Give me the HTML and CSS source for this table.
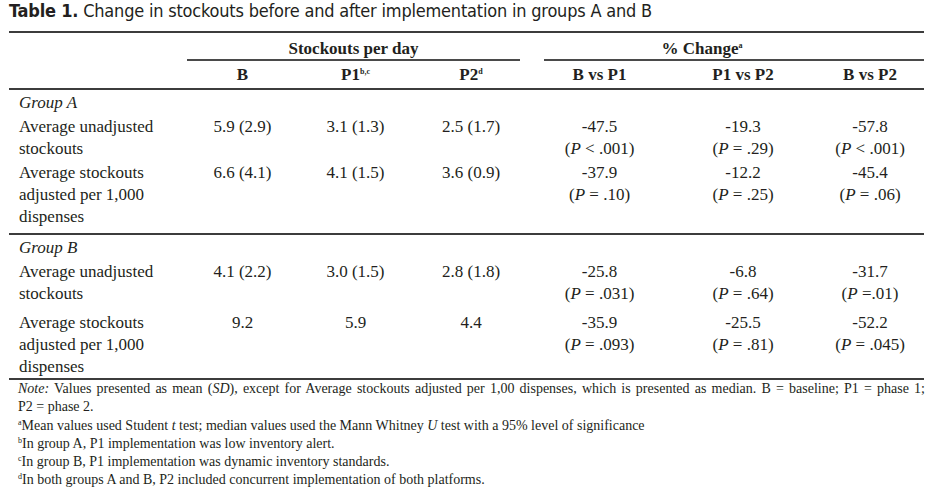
FILE: index.html
```html
<!DOCTYPE html>
<html>
<head>
<meta charset="utf-8">
<link rel="stylesheet" href="styles.css">
</head>
<body>
<div class="page">
  <h1 class="title"><b>Table 1.</b> Change in stockouts before and after implementation in groups A and B</h1>
  <table class="data">
    <colgroup>
      <col class="c-label"><col class="c-b"><col class="c-p1"><col class="c-p2"><col class="c-bp1"><col class="c-p1p2"><col class="c-bp2">
    </colgroup>
    <thead>
      <tr class="h1">
        <th></th>
        <th colspan="3"><div class="span-head span-left">Stockouts per day</div></th>
        <th colspan="3"><div class="span-head span-right">% Change<sup>a</sup></div></th>
      </tr>
      <tr class="h2">
        <th></th>
        <th>B</th>
        <th>P1<sup>b,c</sup></th>
        <th>P2<sup>d</sup></th>
        <th>B vs P1</th>
        <th>P1 vs P2</th>
        <th>B vs P2</th>
      </tr>
    </thead>
    <tbody class="grp-a">
      <tr class="group"><td colspan="7"><i>Group A</i></td></tr>
      <tr>
        <td class="label">Average unadjusted stockouts</td>
        <td>5.9 (2.9)</td><td>3.1 (1.3)</td><td>2.5 (1.7)</td>
        <td class="pc">-47.5<br>(<i>P</i> &lt; .001)</td>
        <td class="pc">-19.3<br>(<i>P</i> = .29)</td>
        <td class="pc">-57.8<br>(<i>P</i> &lt; .001)</td>
      </tr>
      <tr class="last">
        <td class="label">Average stockouts adjusted per 1,000 dispenses</td>
        <td>6.6 (4.1)</td><td>4.1 (1.5)</td><td>3.6 (0.9)</td>
        <td class="pc">-37.9<br>(<i>P</i> = .10)</td>
        <td class="pc">-12.2<br>(<i>P</i> = .25)</td>
        <td class="pc">-45.4<br>(<i>P</i> = .06)</td>
      </tr>
    </tbody>
    <tbody class="grp-b">
      <tr class="group"><td colspan="7"><i>Group B</i></td></tr>
      <tr class="wide">
        <td class="label">Average unadjusted stockouts</td>
        <td>4.1 (2.2)</td><td>3.0 (1.5)</td><td>2.8 (1.8)</td>
        <td class="pc">-25.8<br>(<i>P</i> = .031)</td>
        <td class="pc">-6.8<br>(<i>P</i> = .64)</td>
        <td class="pc">-31.7<br>(<i>P</i> =.01)</td>
      </tr>
      <tr>
        <td class="label">Average stockouts adjusted per 1,000 dispenses</td>
        <td>9.2</td><td>5.9</td><td>4.4</td>
        <td class="pc">-35.9<br>(<i>P</i> = .093)</td>
        <td class="pc">-25.5<br>(<i>P</i> = .81)</td>
        <td class="pc">-52.2<br>(<i>P</i> = .045)</td>
      </tr>
    </tbody>
  </table>
  <div class="notes">
    <p class="just"><i>Note:</i> Values presented as mean (<i>SD</i>), except for Average stockouts adjusted per 1,00 dispenses, which is presented as median. B = baseline; P1 = phase 1;</p>
    <p>P2 = phase 2.</p>
    <p><sup>a</sup>Mean values used Student <i>t</i> test; median values used the Mann Whitney <i>U</i> test with a 95% level of significance</p>
    <p><sup>b</sup>In group A, P1 implementation was low inventory alert.</p>
    <p><sup>c</sup>In group B, P1 implementation was dynamic inventory standards.</p>
    <p><sup>d</sup>In both groups A and B, P2 included concurrent implementation of both platforms.</p>
  </div>
</div>
</body>
</html>
```
FILE: styles.css
```css
html, body {
  margin: 0;
  padding: 0;
  background: #ffffff;
}
.page {
  width: 916px;
  padding: 0 15px 0 9px;
  color: #231f20;
  font-family: "Liberation Serif", "Times New Roman", serif;
}
.title {
  margin: 0 0 9px;
  font-family: "Liberation Sans Narrow", "DejaVu Sans Condensed", "Liberation Sans", sans-serif;
  font-stretch: condensed;
  font-size: 18px;
  line-height: 22px;
  font-weight: 400;
  letter-spacing: -0.2px;
}
.title b {
  font-weight: 700;
}
.data {
  width: 915px;
  table-layout: fixed;
  border-collapse: collapse;
  border-top: 2px solid #3c3c3c;
  font-size: 17px;
  line-height: 22px;
}
.c-label { width: 178px; }
.c-b { width: 111px; }
.c-p1 { width: 115px; }
.c-p2 { width: 116px; }
.c-bp1 { width: 141px; }
.c-p1p2 { width: 146px; }
.c-bp2 { width: 108px; }
.data th {
  padding: 0;
  font-weight: 700;
  text-align: center;
  vertical-align: top;
}
.h1 th {
  line-height: 20px;
}
.span-head {
  padding-top: 6px;
  border-bottom: 2px solid #4a4a4a;
}
.span-left {
  margin-right: 9px;
}
.span-right {
  margin-left: 15px;
  padding-right: 64px;
}
.h2 th {
  padding-top: 4px;
  padding-bottom: 3px;
  line-height: 20px;
  height: 20px;
  border-bottom: 2px solid #3c3c3c;
}
.data sup {
  font-size: 8px;
  line-height: 0;
  vertical-align: 6px;
  font-weight: 700;
}
.data td {
  padding: 2px 0 0;
  text-align: center;
  vertical-align: top;
}
.data td.label {
  text-align: left;
  padding-left: 10px;
  padding-right: 20px;
}
.group td {
  text-align: left;
  padding-left: 10px;
}
.data tr.last td {
  padding-bottom: 5px;
}
.data tr.wide td {
  padding-bottom: 5px;
}
.data tbody {
  border-bottom: 2px solid #3c3c3c;
}
.notes {
  padding-left: 9px;
  font-size: 14px;
  line-height: 18.3px;
}
.notes p {
  margin: 0;
}
.notes .just {
  text-align: justify;
  text-align-last: justify;
}
.notes sup {
  font-size: 8px;
  line-height: 0;
  vertical-align: 5px;
}
```
